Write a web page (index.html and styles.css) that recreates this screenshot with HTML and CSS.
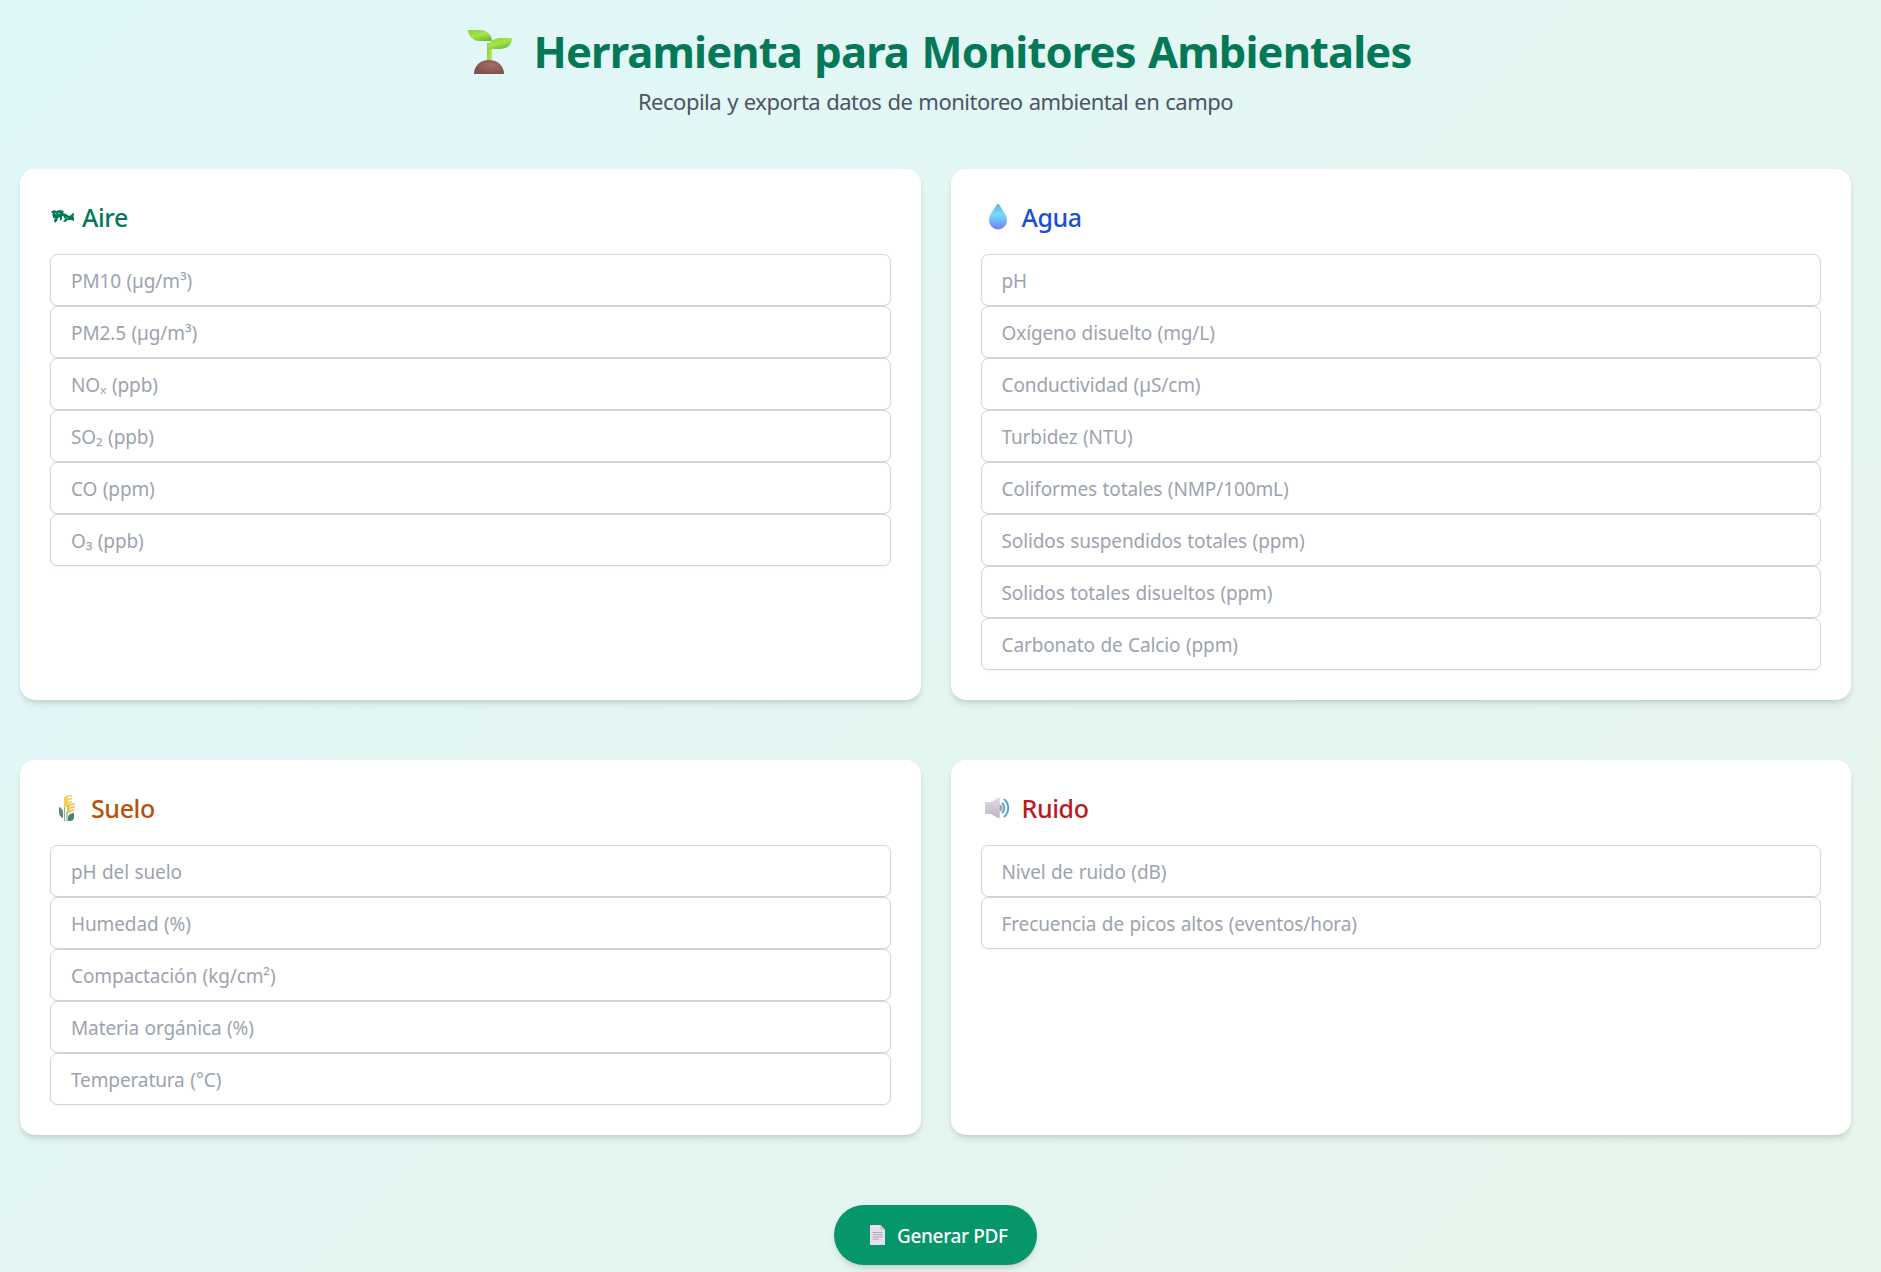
FILE: index.html
```html
<!DOCTYPE html>
<html lang="es">
<head>
<meta charset="utf-8">
<title>Herramienta para Monitores Ambientales</title>
<link rel="stylesheet" href="styles.css">
</head>
<body>
<header class="header">
  <h1 class="title">
    <svg class="sprout" viewBox="0 0 44 45" aria-hidden="true">
      <defs>
        <linearGradient id="leaf" x1="0" y1="0" x2="0.6" y2="1"><stop offset="0" stop-color="#86ce3c"/><stop offset="0.55" stop-color="#a6e547"/><stop offset="1" stop-color="#72bd3a"/></linearGradient>
        <linearGradient id="stem" x1="0" x2="1" y1="0" y2="0"><stop offset="0" stop-color="#91ce45"/><stop offset="1" stop-color="#b8ee5c"/></linearGradient>
        <radialGradient id="soil" cx="0.6" cy="0.35" r="0.7"><stop offset="0" stop-color="#a56c65"/><stop offset="1" stop-color="#7f4f4c"/></radialGradient>
      </defs>
      <path d="M19 13h5v20h-5z" fill="url(#stem)"/>
      <path d="M0 0h12c7 0 12 5 12 11H12C5 11 0 6 0 0z" fill="url(#leaf)"/>
      <path d="M44 8c0 7-5 11-12 11H20c0-6 5-11 12-11z" fill="url(#leaf)"/>
      <path d="M6 44c0-8 6-14 15-14s15 6 15 14z" fill="url(#soil)"/>
    </svg>
    <span class="title-text">Herramienta para Monitores Ambientales</span>
  </h1>
  <p class="subtitle">Recopila y exporta datos de monitoreo ambiental en campo</p>
</header>
<main class="grid">
  <section class="card">
    <h2 class="heading aire">
      <svg class="icon-wind" viewBox="0 0 23 14" aria-hidden="true"><path d="M0 2l3-2 2 1 4-1 4 1-1 2 3 1 3 2 2-1 2-2h1l-.5 3 .5 2v3l-3-1-3 0-3 2-2 0 2-3-2-3-1 0 0 3-2 2 0-4-2 1-1 3-2 2-1-2 1-3-2 0 0-2-1-1 1-1z" fill="#047857"/><path d="M3.500 3l2 1M7 2.500l2 1.500M14.500 7.500l2 1" stroke="#fff" stroke-width=".6"/></svg>
      <span>Aire</span>
    </h2>
    <input class="field" placeholder="PM10 (µg/m³)">
    <input class="field" placeholder="PM2.5 (µg/m³)">
    <input class="field" placeholder="NOₓ (ppb)">
    <input class="field" placeholder="SO₂ (ppb)">
    <input class="field" placeholder="CO (ppm)">
    <input class="field" placeholder="O₃ (ppb)">
  </section>
  <section class="card">
    <h2 class="heading agua">
      <svg class="icon" viewBox="0 0 26 26" aria-hidden="true"><defs><linearGradient id="drop" x1="0" y1="0" x2="0" y2="1"><stop offset="0" stop-color="#64b5d5"/><stop offset="0.4" stop-color="#79d9fc"/><stop offset="0.7" stop-color="#6ab3fa"/><stop offset="1" stop-color="#7a75f5"/></linearGradient></defs><path d="M13 0c1 0 1.400.6 2 1.800C18 7 22 11 22 16.500a9 9 0 0 1-18 0C4 11 8 7 11 1.800 11.600.6 12 0 13 0z" fill="url(#drop)"/></svg>
      <span>Agua</span>
    </h2>
    <input class="field" placeholder="pH">
    <input class="field" placeholder="Oxígeno disuelto (mg/L)">
    <input class="field" placeholder="Conductividad (µS/cm)">
    <input class="field" placeholder="Turbidez (NTU)">
    <input class="field" placeholder="Coliformes totales (NMP/100mL)">
    <input class="field" placeholder="Solidos suspendidos totales (ppm)">
    <input class="field" placeholder="Solidos totales disueltos (ppm)">
    <input class="field" placeholder="Carbonato de Calcio (ppm)">
  </section>
  <section class="card">
    <h2 class="heading suelo">
      <svg class="icon" viewBox="0 0 26 26" aria-hidden="true">
        <path d="M5 12c3 1 4 3 4 6v5c-3-1-4-3-4-6z" fill="#568c72"/>
        <path d="M20 18v4c0 3-2 4-4 4h-2v-4c1-3 3-4 6-4z" fill="#428777"/>
        <path d="M10.500 10v16M13 16v10" stroke="#7eb38b" stroke-width="1.200"/>
        <path d="M10 3c1-2 3-3 8-2.800v1.300l-4 .5v1.700l4-1v1.500l-4 1.300v1.200l4-.7v1.500l-4 1.300v3l-4 1z" fill="#f2ce64"/>
        <path d="M13 11c1-2 3-3 8-2.800v1.500l-5 .7v1.500l5-1v1.600l-5 1.300v1l4-.5v1.600l-4 1V18h-3z" fill="#efc557"/>
      </svg>
      <span>Suelo</span>
    </h2>
    <input class="field" placeholder="pH del suelo">
    <input class="field" placeholder="Humedad (%)">
    <input class="field" placeholder="Compactación (kg/cm²)">
    <input class="field" placeholder="Materia orgánica (%)">
    <input class="field" placeholder="Temperatura (°C)">
  </section>
  <section class="card">
    <h2 class="heading ruido">
      <svg class="icon" viewBox="0 0 26 26" aria-hidden="true"><defs><linearGradient id="speaker" x1="0" y1="0" x2="0" y2="1"><stop offset="0" stop-color="#dedbe1"/><stop offset="1" stop-color="#beb4c8"/></linearGradient></defs>
        <path d="M14 9.500a3.500 3.500 0 0 1 0 7z" fill="#a99eb3"/>
        <path d="M1 7h5l7-4c1-.5 1.800 0 1.800 1v18c0 1-.8 1.500-1.800 1l-7-4H1c-.7 0-1-.3-1-1V8c0-.7.300-1 1-1z" fill="url(#speaker)"/>
        <path d="M17.500 8.500c2.300 2.500 2.300 6.500 0 9M19.500 4.500c5 4.500 5 12.500 0 17" fill="none" stroke="#4fa3df" stroke-width="1.900" stroke-linecap="round"/>
      </svg>
      <span>Ruido</span>
    </h2>
    <input class="field" placeholder="Nivel de ruido (dB)">
    <input class="field" placeholder="Frecuencia de picos altos (eventos/hora)">
  </section>
</main>
<div class="actions">
  <button class="button">
    <svg class="icon-doc" viewBox="0 0 15 20" aria-hidden="true"><path d="M0 0h10.500L15 4.500V20H0z" fill="#e5dff0"/><path d="M10.500 0L15 4.500h-4.500z" fill="#c8bdd8"/><path d="M2.500 7.500h10M2.500 9.700h10M2.500 11.900h10M2.500 14.100h6.500" stroke="#aea5bb" stroke-width="1"/></svg>
    <span>Generar PDF</span>
  </button>
</div>
</body>
</html>
```
FILE: styles.css
```css
* { box-sizing: border-box; }
body {
  margin: 0;
  min-height: 1272px;
  padding: 20px 30px 7px 20px;
  font-family: "Noto Sans", "Open Sans", sans-serif;
  background: linear-gradient(135deg, #e0f7fa, #e8f5e9) 0 0 / 100% 1650px no-repeat;
}
.header { height: 149px; padding-top: 7px; text-align: center; }
.title {
  margin: 0;
  height: 50px;
  padding-left: 8px;
  display: flex;
  justify-content: center;
  align-items: center;
  font-size: 43.5px;
  line-height: 50px;
  font-weight: 700;
  color: #047857;
}
.sprout { width: 44px; height: 45px; margin-right: 22px; }
.title-text { height: 52px; letter-spacing: -0.87px; word-spacing: 2px; white-space: nowrap; }
.subtitle { margin: 7px 0 0; font-size: 22px; line-height: 35px; letter-spacing: -0.5px; word-spacing: 0.8px; color: #4b5563; }
.grid { display: grid; grid-template-columns: 1fr 1fr; column-gap: 30px; row-gap: 60px; }
.card {
  padding: 30px;
  border-radius: 15px;
  background: #fff;
  box-shadow: 0 5px 7.500px -1px rgb(0 0 0 / .1), 0 2.500px 5px -2.500px rgb(0 0 0 / .1);
}
.heading {
  margin: 0 0 20px;
  height: 35px;
  display: flex;
  align-items: center;
  font-size: 25px;
  line-height: 35px;
  font-weight: 500;
  letter-spacing: -0.4px;
}
.heading span { padding-top: 2px; }
.icon { width: 26px; height: 26px; margin: 1px 11px 0 4px; }
.icon-wind { width: 23px; height: 14px; margin: 0 8px 0 1px; }
.aire { color: #047857; }
.agua { color: #1d4ed8; }
.suelo { color: #b45309; }
.ruido { color: #b91c1c; }
.field {
  display: block;
  width: 100%;
  height: 52px;
  padding: 11px 20px 9px;
  border: 1px solid #d1d5db;
  border-radius: 7.500px;
  background: #fff;
  font: 400 19px/30px "Noto Sans", "Open Sans", sans-serif;
  letter-spacing: -0.12px;
  word-spacing: 0.7px;
  box-shadow: 0 1px 2.500px rgb(0 0 0 / .06);
}
.field::placeholder { color: #9ca3af; opacity: 1; }
.actions { display: flex; justify-content: center; padding-top: 70px; }
.button {
  display: flex;
  align-items: center;
  width: 203px;
  height: 60px;
  padding: 0 0 0 36px;
  border: 0;
  border-radius: 30px;
  background: #059669;
  color: #fff;
  font: 500 19px/30px "Noto Sans", "Open Sans", sans-serif;
  letter-spacing: -0.35px;
  white-space: nowrap;
  box-shadow: 0 5px 7.500px -1px rgb(0 0 0 / .1), 0 2.500px 5px -2.500px rgb(0 0 0 / .1);
}
.button span { padding-top: 2px; }
.icon-doc { width: 15px; height: 20px; margin-right: 12px; }
```
